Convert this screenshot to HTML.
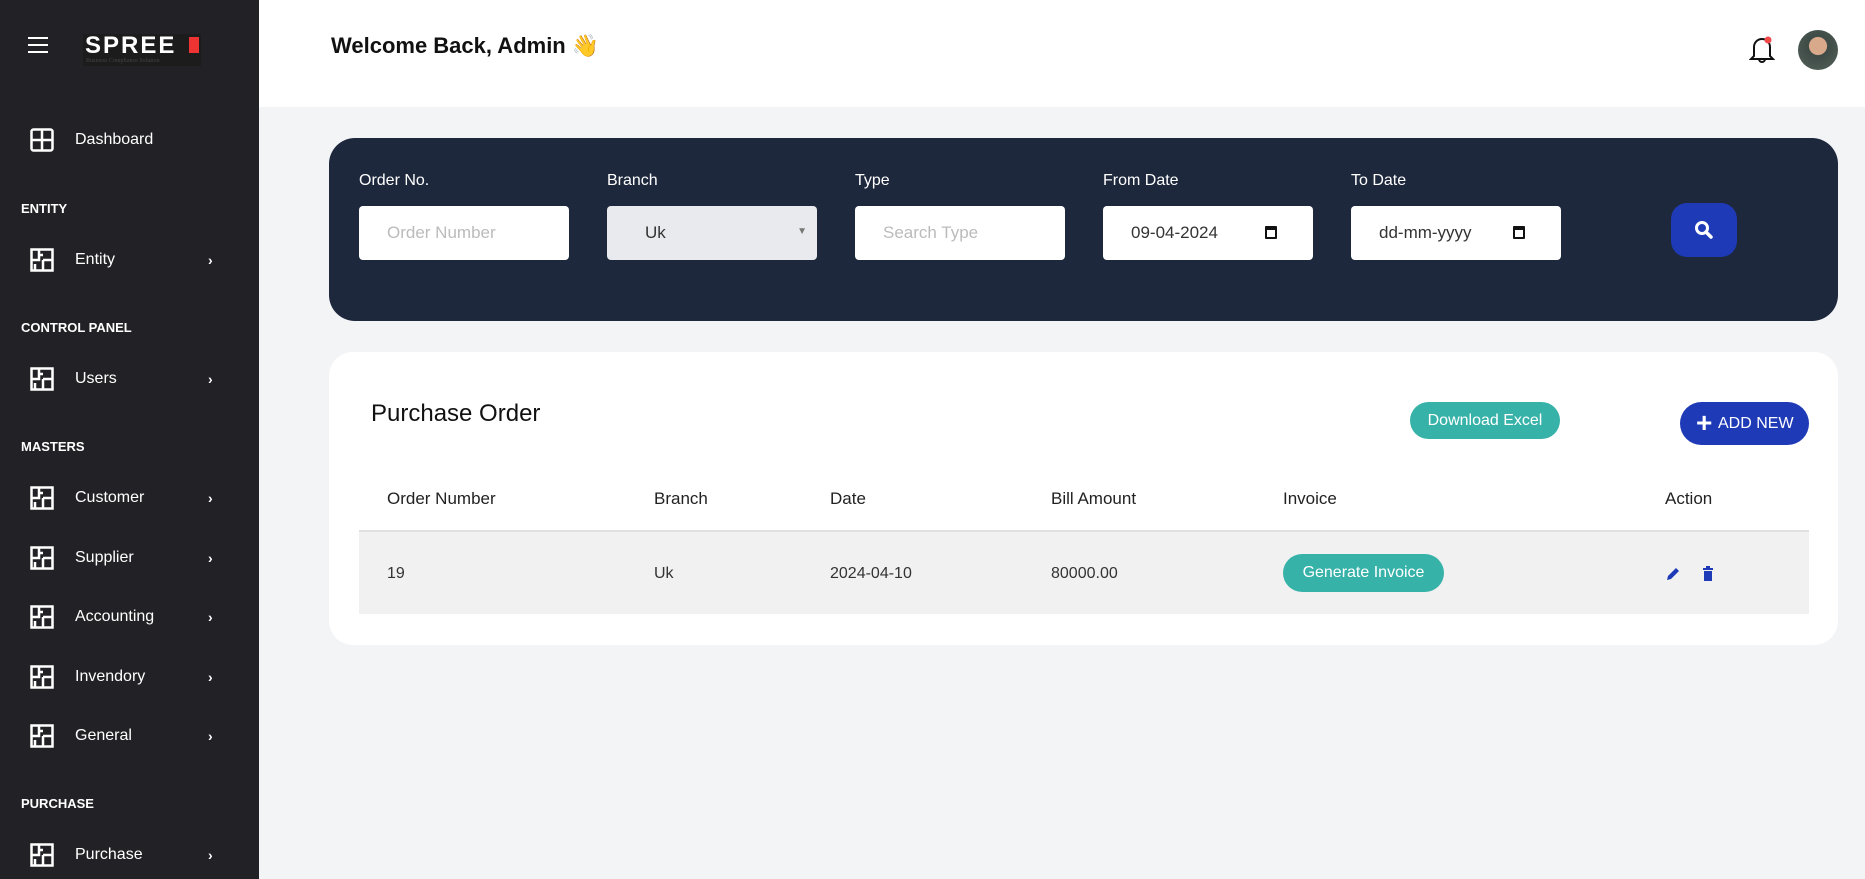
<!DOCTYPE html>
<html><head><meta charset="utf-8"><style>
*{box-sizing:border-box;margin:0;padding:0}
body{width:1865px;height:879px;overflow:hidden;background:#f3f4f6;font-family:"Liberation Sans",sans-serif;position:relative}
.abs{position:absolute}
.sb{left:0;top:0;width:259px;height:879px;background:#222226;color:#fff}
.sec{position:absolute;left:21px;font-size:13px;font-weight:bold}
.it{position:absolute;left:30px;font-size:16px;display:flex;align-items:center;width:190px}
.it svg{margin-right:21px}
.it .ch{position:absolute;left:178px;font-size:14px;font-weight:bold}
.hdr{left:259px;top:0;width:1606px;height:107px;background:#fff}
.panel{left:329px;top:138px;width:1509px;height:183px;background:#1e283d;border-radius:26px}
.lab{position:absolute;top:34px;color:#fff;font-size:16px}
.inp{position:absolute;top:68px;width:210px;height:54px;background:#fff;border-radius:4px;font-size:17px;color:#333;padding:0 0 0 28px;line-height:54px}
.card{left:329px;top:352px;width:1509px;height:293px;background:#fff;border-radius:24px}
.th{position:absolute;top:137px;font-size:17px;color:#222}
.td{position:absolute;top:213px;font-size:16px;color:#333}
.pill{position:absolute;background:#37b2a9;color:#fff;border-radius:20px;text-align:center;font-size:16px}
</style></head><body>
<div class="abs sb">
 <div class="abs" style="left:28px;top:37px;width:20px;height:2px;background:#fff;box-shadow:0 7px 0 #fff,0 14px 0 #fff"></div>
 <div class="abs" style="left:83px;top:34px;width:118px;height:32px;background:#1c1c1c">
  <div style="color:#fff;font-weight:bold;font-size:24px;letter-spacing:2px;line-height:24px;padding-left:2px">SPREE</div>
  <div style="position:absolute;right:2px;top:3px;width:10px;height:16px;background:#e33"></div>
  <div style="font-family:'Liberation Serif',serif;font-size:6px;color:#444;padding-left:3px">Business Compliance Solution</div>
 </div>
 <div class="it" style="top:128px"><svg width="24" height="24" viewBox="0 0 24 24"><rect x="1.5" y="1.5" width="21" height="21" rx="2" fill="none" stroke="#fff" stroke-width="2.5"/><path d="M12 1.5V22.5M1.5 12H22.5" stroke="#fff" stroke-width="2.5"/></svg>Dashboard</div>
 <div class="sec" style="top:201px">ENTITY</div>
 <div class="sec" style="top:320px">CONTROL PANEL</div>
 <div class="sec" style="top:439px">MASTERS</div>
 <div class="sec" style="top:796px">PURCHASE</div>
</div>
<div class="abs hdr">
 <div class="abs" style="left:72px;top:33px;font-size:22px;font-weight:bold;color:#111">Welcome Back, Admin 👋</div>
 <svg class="abs" style="left:1490px;top:34px" width="26" height="32" viewBox="0 0 26 32"><path d="M5 22V13a8 8 0 0 1 16 0v9l3 3H2z M10 25a3 3 0 0 0 6 0" fill="none" stroke="#111" stroke-width="2"/><circle cx="19" cy="6" r="3.5" fill="#f04a4a"/></svg>
 <div class="abs" style="left:1539px;top:30px;width:40px;height:40px;border-radius:50%;background:radial-gradient(circle at 50% 40%,#d9a98c 0 28%,#3d4a45 30%,#55625c 100%)"></div>
</div>
<div class="abs panel">
 <div class="lab" style="left:30px">Order No.</div><div class="inp" style="left:30px;color:#bbb">Order Number</div>
 <div class="lab" style="left:278px">Branch</div><div class="inp" style="left:278px;background:#e8eaed;padding-left:38px">Uk<span style="position:absolute;right:10px;top:-1px;font-size:10px;color:#777">▼</span></div>
 <div class="lab" style="left:526px">Type</div><div class="inp" style="left:526px;color:#bbb">Search Type</div>
 <div class="lab" style="left:774px">From Date</div><div class="inp" style="left:774px">09-04-2024<span style="position:absolute;left:162px;top:20px;width:12px;height:13px;border:2px solid #111;border-top-width:4px;border-radius:1px"></span></div>
 <div class="lab" style="left:1022px">To Date</div><div class="inp" style="left:1022px">dd-mm-yyyy<span style="position:absolute;left:162px;top:20px;width:12px;height:13px;border:2px solid #111;border-top-width:4px;border-radius:1px"></span></div>
 <div class="abs" style="left:1342px;top:65px;width:66px;height:54px;background:#1f3ab6;border-radius:16px"><svg style="position:absolute;left:23px;top:17px" width="20" height="20" viewBox="0 0 20 20"><circle cx="8" cy="8" r="5.5" fill="none" stroke="#fff" stroke-width="3"/><path d="M12 12l5 5" stroke="#fff" stroke-width="3.5" stroke-linecap="round"/></svg></div>
</div>
<div class="abs card">
 <div class="abs" style="left:42px;top:48px;font-size:24px;color:#111">Purchase Order</div>
 <div class="pill" style="left:1081px;top:50px;width:150px;height:37px;line-height:37px">Download Excel</div>
 <div class="abs" style="left:1351px;top:50px;width:129px;height:43px;background:#1f3ab6;border-radius:22px;color:#fff;font-size:16px;line-height:43px;padding-left:38px"><span style="position:absolute;left:16px;top:-1px;font-size:28px;font-weight:bold">+</span>ADD NEW</div>
 <div class="th" style="left:58px">Order Number</div>
 <div class="th" style="left:325px">Branch</div>
 <div class="th" style="left:501px">Date</div>
 <div class="th" style="left:722px">Bill Amount</div>
 <div class="th" style="left:954px">Invoice</div>
 <div class="th" style="left:1336px">Action</div>
 <div class="abs" style="left:30px;top:178px;width:1450px;height:84px;background:#f1f1f1;border-top:2px solid #e0e0e0"></div>
 <div class="td" style="left:58px">19</div>
 <div class="td" style="left:325px">Uk</div>
 <div class="td" style="left:501px">2024-04-10</div>
 <div class="td" style="left:722px">80000.00</div>
 <div class="pill" style="left:954px;top:202px;width:161px;height:38px;line-height:38px">Generate Invoice</div>
 <svg class="abs" style="left:1336px;top:214px" width="16" height="16" viewBox="0 0 16 16"><path d="M2 14l1-4 8-8 3 3-8 8z" fill="#1f3ab6"/></svg>
 <svg class="abs" style="left:1373px;top:214px" width="12" height="15" viewBox="0 0 12 15"><path d="M1 2h10v2H1zM4 0h4v2H4zM2 5h8v10H2z" fill="#1f3ab6"/></svg>
</div>
<div class="abs" style="left:0;top:0;color:#fff">
 <div class="it" style="top:248px"><svg width="24" height="24" viewBox="0 0 24 24"><rect x="1.5" y="1.5" width="21" height="21" fill="none" stroke="#fff" stroke-width="2.5"/><path d="M9 1.5V12H1.5M9 7h4M13 12h9.5M13 12v10.5M5 16v6" stroke="#fff" stroke-width="2.5" fill="none"/></svg>Entity<span class="ch">›</span></div>
 <div class="it" style="top:367px"><svg width="24" height="24" viewBox="0 0 24 24"><rect x="1.5" y="1.5" width="21" height="21" fill="none" stroke="#fff" stroke-width="2.5"/><path d="M9 1.5V12H1.5M9 7h4M13 12h9.5M13 12v10.5M5 16v6" stroke="#fff" stroke-width="2.5" fill="none"/></svg>Users<span class="ch">›</span></div>
 <div class="it" style="top:486px"><svg width="24" height="24" viewBox="0 0 24 24"><rect x="1.5" y="1.5" width="21" height="21" fill="none" stroke="#fff" stroke-width="2.5"/><path d="M9 1.5V12H1.5M9 7h4M13 12h9.5M13 12v10.5M5 16v6" stroke="#fff" stroke-width="2.5" fill="none"/></svg>Customer<span class="ch">›</span></div>
 <div class="it" style="top:546px"><svg width="24" height="24" viewBox="0 0 24 24"><rect x="1.5" y="1.5" width="21" height="21" fill="none" stroke="#fff" stroke-width="2.5"/><path d="M9 1.5V12H1.5M9 7h4M13 12h9.5M13 12v10.5M5 16v6" stroke="#fff" stroke-width="2.5" fill="none"/></svg>Supplier<span class="ch">›</span></div>
 <div class="it" style="top:605px"><svg width="24" height="24" viewBox="0 0 24 24"><rect x="1.5" y="1.5" width="21" height="21" fill="none" stroke="#fff" stroke-width="2.5"/><path d="M9 1.5V12H1.5M9 7h4M13 12h9.5M13 12v10.5M5 16v6" stroke="#fff" stroke-width="2.5" fill="none"/></svg>Accounting<span class="ch">›</span></div>
 <div class="it" style="top:665px"><svg width="24" height="24" viewBox="0 0 24 24"><rect x="1.5" y="1.5" width="21" height="21" fill="none" stroke="#fff" stroke-width="2.5"/><path d="M9 1.5V12H1.5M9 7h4M13 12h9.5M13 12v10.5M5 16v6" stroke="#fff" stroke-width="2.5" fill="none"/></svg>Invendory<span class="ch">›</span></div>
 <div class="it" style="top:724px"><svg width="24" height="24" viewBox="0 0 24 24"><rect x="1.5" y="1.5" width="21" height="21" fill="none" stroke="#fff" stroke-width="2.5"/><path d="M9 1.5V12H1.5M9 7h4M13 12h9.5M13 12v10.5M5 16v6" stroke="#fff" stroke-width="2.5" fill="none"/></svg>General<span class="ch">›</span></div>
 <div class="it" style="top:843px"><svg width="24" height="24" viewBox="0 0 24 24"><rect x="1.5" y="1.5" width="21" height="21" fill="none" stroke="#fff" stroke-width="2.5"/><path d="M9 1.5V12H1.5M9 7h4M13 12h9.5M13 12v10.5M5 16v6" stroke="#fff" stroke-width="2.5" fill="none"/></svg>Purchase<span class="ch">›</span></div>
</div>
</body></html>
